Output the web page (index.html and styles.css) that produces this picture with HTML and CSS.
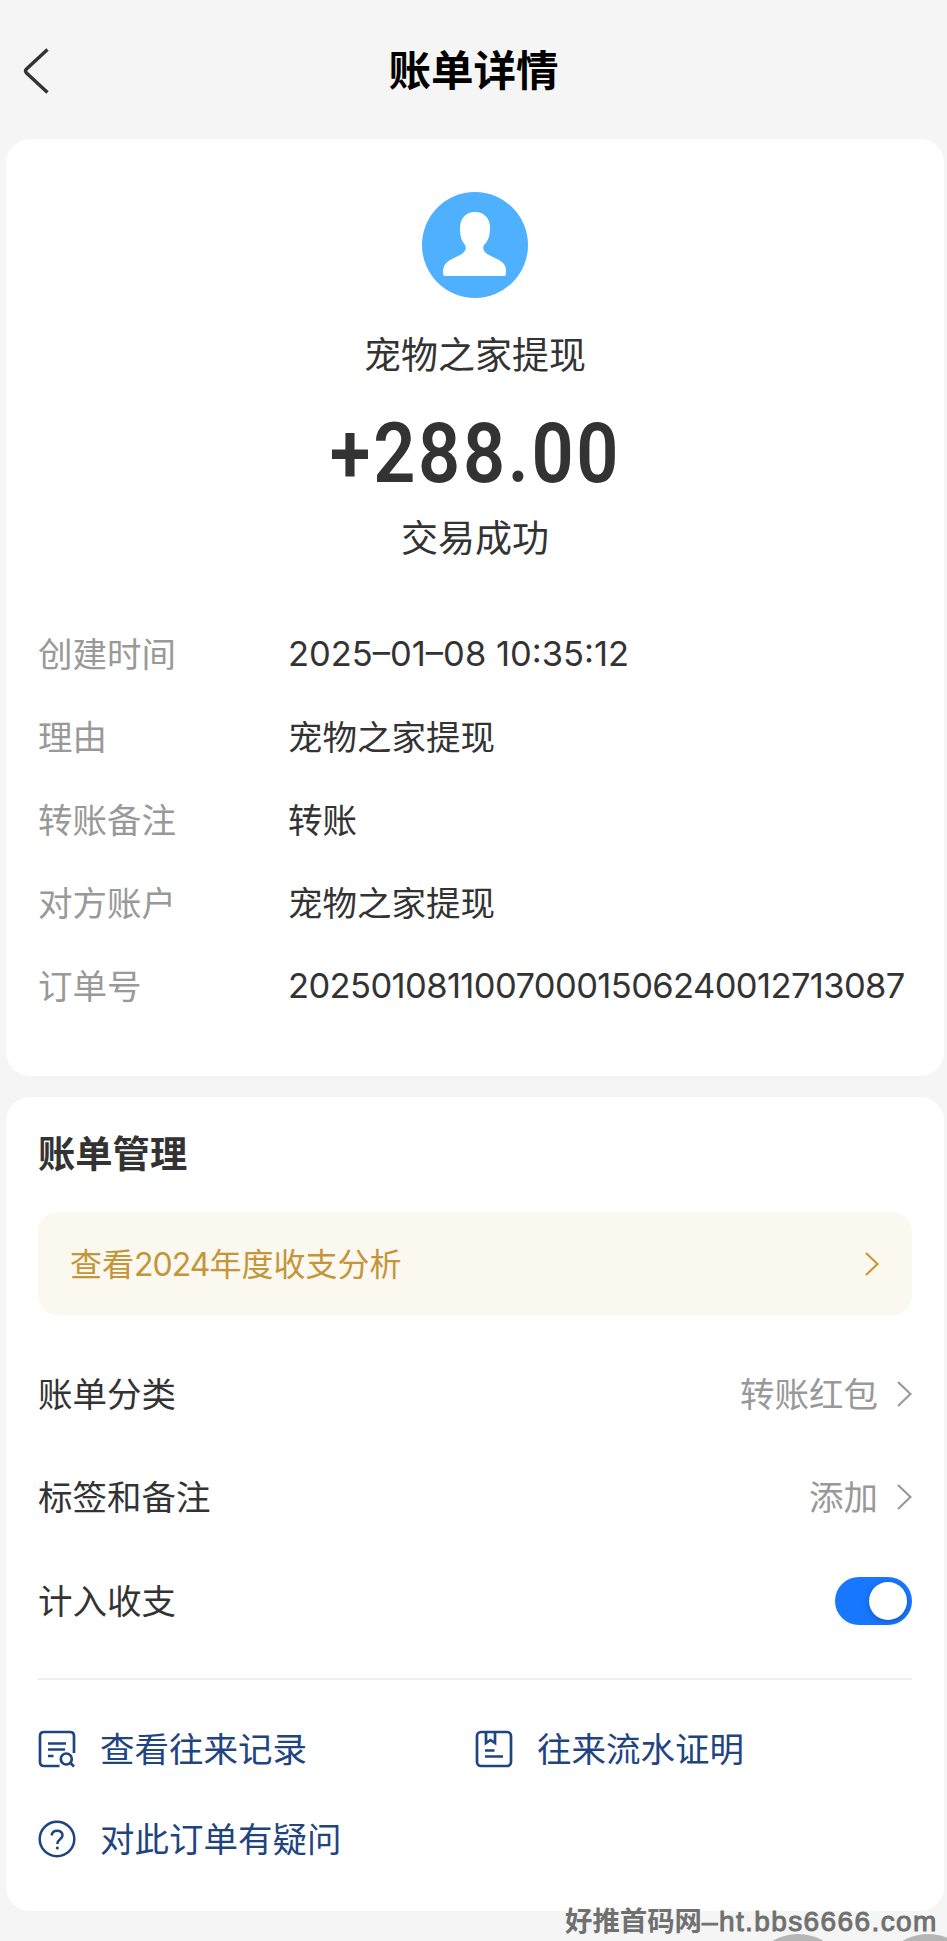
FILE: index.html
```html
<!DOCTYPE html>
<html lang="zh-CN">
<head>
    <meta charset="UTF-8">
    <meta name="viewport" content="width=device-width, initial-scale=1.0">
    <title>账单详情</title>
    <link rel="stylesheet" href="styles.css">
</head>
<body>
    <header class="header">
        <svg class="back" viewBox="0 0 28 48" fill="none" stroke="#333" stroke-width="3.400">
            <path d="M25.500 2.500 L4.500 22 Q2.600 24 4.500 26 L25.500 45.500"/>
        </svg>
        <h1>账单详情</h1>
    </header>

    <section class="card detail-card">
        <svg class="avatar" viewBox="0 0 106 106">
            <circle cx="53" cy="53" r="53" fill="#4fb0ff"/>
            <path fill="#fff" d="M53 20C43 20 38 27 38 36C38 45 40 49 43 53C45 57 43 60 38 63L28 68C23 71 21 75 21 80V82Q21 84 23 84H82Q84 84 84 82V79C84 74 82 71 77 68L67 63C62 60 60 57 62 53C66 49 68 44 68 36C68 27 63 20 53 20Z"/>
        </svg>
        <p class="payee">宠物之家提现</p>
        <p class="amount">+288.00</p>
        <p class="status">交易成功</p>

        <dl class="info">
            <dt>创建时间</dt>
            <dd class="date">2025–01–08 10:35:12</dd>
            <dt>理由</dt>
            <dd>宠物之家提现</dd>
            <dt>转账备注</dt>
            <dd>转账</dd>
            <dt>对方账户</dt>
            <dd>宠物之家提现</dd>
            <dt>订单号</dt>
            <dd class="order-no">20250108110070001506240012713087</dd>
        </dl>
    </section>

    <section class="card manage-card">
        <h2>账单管理</h2>
        <div class="banner">
            <span class="text">查看<span class="year">2024</span>年度收支分析</span>
            <svg class="banner-arrow" viewBox="0 0 16 26" fill="none" stroke="#c89a3c" stroke-width="2.200">
                <path d="M2 2 L13.500 13 L2 24"/>
            </svg>
        </div>

        <div class="row">
            <span class="text">账单分类</span>
            <span class="row-value"><span class="text">转账红包</span>
                <svg class="arrow" viewBox="0 0 16 28" fill="none" stroke="#999" stroke-width="2.200">
                    <path d="M2 2 L14.500 14 L2 26"/>
                </svg>
            </span>
        </div>
        <div class="row">
            <span class="text">标签和备注</span>
            <span class="row-value"><span class="text">添加</span>
                <svg class="arrow" viewBox="0 0 16 28" fill="none" stroke="#999" stroke-width="2.200">
                    <path d="M2 2 L14.500 14 L2 26"/>
                </svg>
            </span>
        </div>
        <div class="row">
            <span class="text">计入收支</span>
            <span class="toggle"></span>
        </div>

        <div class="links">
            <a class="link">
                <svg class="link-icon" viewBox="0 0 38 38" fill="none" stroke="#1f4482" stroke-width="2.700">
                    <path d="M36 23V6Q36 2 32 2H6Q2 2 2 6V32Q2 36 6 36H21.500"/>
                    <path d="M10 13.500H28M10 19.500H27M10 26H15.500"/>
                    <circle cx="28.300" cy="29" r="5.500"/>
                    <path d="M32 32.500L36 36.500"/>
                </svg>
                <span class="text">查看往来记录</span>
            </a>
            <a class="link">
                <svg class="link-icon" viewBox="0 0 38 38" fill="none" stroke="#1f4482" stroke-width="2.700">
                    <rect x="2" y="2" width="34" height="34" rx="4"/>
                    <path d="M11 2V13L15.500 10L20 13V2"/>
                    <path d="M10 20.500H19.500M10 26.500H28"/>
                </svg>
                <span class="text">往来流水证明</span>
            </a>
            <a class="link">
                <svg class="link-icon" viewBox="0 0 38 38" fill="none" stroke="#1f4482" stroke-width="2.500">
                    <circle cx="19" cy="19" r="17.300"/>
                    <path d="M13.800 15.500C13.800 9 24.500 9 24.500 15.500C24.500 19 19.300 19 19.300 24"/>
                    <circle cx="19.300" cy="28" r="1.600" fill="#1f4482" stroke="none"/>
                </svg>
                <span class="text">对此订单有疑问</span>
            </a>
        </div>
    </section>

    <div class="bubble bubble-left"></div>
    <div class="bubble bubble-right"></div>
    <div class="watermark">好推首码网<span class="watermark-url">–ht.bbs6666.com</span></div>
</body>
</html>
```
FILE: styles.css
```css
* {
    box-sizing: border-box;
}
body {
    font-family: Inter, 'Noto Sans CJK SC', sans-serif;
    background-color: #f5f5f5;
    color: #333;
    margin: 0;
    height: 1941px;
    position: relative;
    overflow: hidden;
    font-size: 34.5px;
}
h1, h2, p, dl, dd {
    margin: 0;
}
.header {
    display: grid;
    grid-template-columns: 60px 1fr 60px;
    align-items: center;
    height: 139px;
    padding-top: 2px;
}
.back {
    width: 28px;
    height: 48px;
    margin-left: 22px;
}
h1 {
    font-family: 'Noto Sans CJK SC', sans-serif;
    font-size: 42.5px;
    line-height: 60px;
    font-weight: 700;
    color: #000;
    text-align: center;
    padding-bottom: 5px;
}
.card {
    background-color: #fff;
    border-radius: 24px;
    margin: 0 3px 0 6px;
    padding: 0 32px;
}
.detail-card {
    display: flex;
    flex-direction: column;
    align-items: center;
    height: 937px;
    padding-top: 53px;
}
.avatar {
    width: 106px;
    height: 106px;
}
.payee, .status {
    font-family: 'Noto Sans CJK SC', sans-serif;
    font-size: 37px;
    line-height: 50px;
}
.payee {
    margin-top: 30px;
}
.amount {
    font-family: Roboto, sans-serif;
    font-size: 84px;
    font-weight: 600;
    line-height: 100px;
    letter-spacing: 3px;
    margin-top: 26px;
    transform: scaleX(0.88);
}
.status {
    margin-top: 7px;
}
.info {
    align-self: stretch;
    display: grid;
    grid-template-columns: 250px 1fr;
    grid-auto-rows: 83px;
    align-items: center;
    margin-top: 51px;
    white-space: nowrap;
}
.info dt {
    color: #999;
}
.info dt, .info dd, .text {
    padding-bottom: 4px;
}
.info .date, .info .order-no {
    padding-bottom: 0;
}
.order-no {
    letter-spacing: -0.6px;
}
.manage-card {
    height: 814px;
    margin-top: 21px;
    padding-top: 29px;
}
h2 {
    font-family: 'Noto Sans CJK SC', sans-serif;
    font-size: 37.3px;
    line-height: 52px;
    font-weight: 700;
}
.banner {
    display: flex;
    align-items: center;
    justify-content: space-between;
    height: 103px;
    margin-top: 34px;
    margin-bottom: 27px;
    padding: 0 32px;
    border-radius: 20px;
    background-color: #fbf8f0;
    color: #c4963a;
    font-size: 32px;
}
.year {
    letter-spacing: -1px;
}
.banner-arrow {
    width: 16px;
    height: 26px;
}
.row {
    display: flex;
    align-items: center;
    justify-content: space-between;
    height: 103.5px;
}
.row-value {
    display: flex;
    align-items: center;
    gap: 18px;
    color: #999;
}
.arrow {
    width: 16px;
    height: 28px;
}
.toggle {
    width: 77px;
    height: 48px;
    padding: 5px;
    border-radius: 24px;
    background-color: #1777ff;
}
.toggle::after {
    content: '';
    display: block;
    width: 38px;
    height: 38px;
    margin-left: auto;
    border-radius: 50%;
    background-color: #fff;
    box-shadow: 0 2px 6px rgba(0, 0, 0, 0.25);
}
.links {
    display: grid;
    grid-template-columns: 1fr 1fr;
    grid-auto-rows: 90.5px;
    margin-top: 25px;
    padding-top: 24px;
    border-top: 2px solid #eee;
}
.link {
    display: flex;
    align-items: center;
    gap: 24px;
    color: #1f4482;
}
.link-icon {
    width: 38px;
    height: 38px;
}
.bubble {
    position: absolute;
    top: 1934px;
    width: 100px;
    height: 100px;
    border-radius: 50%;
    background-color: #b5b5b5;
}
.bubble-left {
    left: 748px;
}
.bubble-right {
    left: 878px;
}
.watermark {
    position: absolute;
    left: 565px;
    top: 1899px;
    font-family: 'Noto Sans CJK SC', sans-serif;
    font-size: 27.4px;
    font-weight: 700;
    line-height: 40px;
    color: #707070;
    white-space: nowrap;
}
.watermark-url {
    font-family: 'Liberation Sans', sans-serif;
    font-size: 28px;
    font-weight: 400;
    letter-spacing: 1.4px;
    -webkit-text-stroke: 1px #707070;
}
```
